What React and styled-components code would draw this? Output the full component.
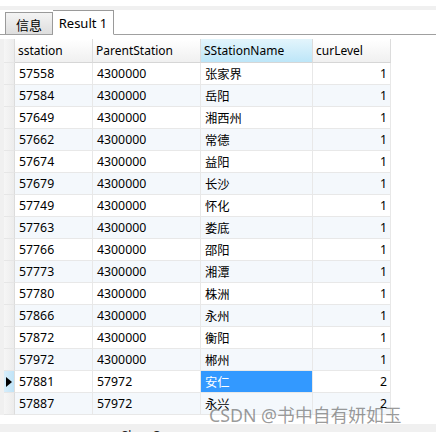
import React from "react";
import styled, { createGlobalStyle } from "styled-components";

const GlobalStyle = createGlobalStyle`
  html, body {
    margin: 0;
    padding: 0;
    background: #fff;
  }
  body {
    font-family: "Noto Sans", "Noto Sans CJK SC", sans-serif;
    font-size: 12px;
    color: #000;
  }
`;

const Window = styled.div`
  width: 436px;
  height: 432px;
  overflow: hidden;
  position: relative;
  background: #fff;
  display: flex;
  flex-direction: column;
`;

const TopBand = styled.div`
  height: 4px;
  margin-top: 6px;
  background: #f0f0f0;
`;

const TabStrip = styled.div`
  display: flex;
  align-items: flex-end;
  height: 24px;
  padding-left: 5px;
  border-bottom: 1px solid #a0a0a0;
`;

const Tab = styled.div`
  box-sizing: border-box;
  display: flex;
  align-items: center;
  justify-content: center;
  width: ${({ $w }) => $w}px;
  height: ${({ $active }) => ($active ? 25 : 22)}px;
  margin-bottom: ${({ $active }) => ($active ? -1 : 0)}px;
  border: 1px solid #9a9a9a;
  border-bottom: ${({ $active }) => ($active ? "1px solid #fff" : "none")};
  border-left: ${({ $active }) => ($active ? "none" : "1px solid #9a9a9a")};
  background: ${({ $active }) =>
    $active ? "#fff" : "linear-gradient(#f4f4f4, #dedede)"};
  font-size: 13px;
  padding-top: ${({ $active }) => ($active ? 0 : 2)}px;
`;

const GridArea = styled.div`
  display: flex;
  padding-top: 4px;
`;

const LeftStrip = styled.div`
  width: 4px;
  background: #f0f0f0;
`;

const Grid = styled.div`
  display: flex;
  flex-direction: column;
`;

const Row = styled.div`
  display: grid;
  grid-template-columns: 11px 78px 108px 112px 78px;
  height: ${({ $head }) => ($head ? 24 : 22)}px;
  background: ${({ $alt }) => ($alt ? "#f4f8fc" : "#fff")};
`;

const RowHead = styled.div`
  box-sizing: border-box;
  position: relative;
  border-right: 1px solid #dcdcdc;
  border-bottom: 1px solid #e6e6e6;
  background: ${({ $sel }) =>
    $sel ? "linear-gradient(90deg, #d8eefb, #bfe3f7)" : "linear-gradient(90deg, #f6f6f6, #ececec)"};
`;

const Pointer = styled.span`
  position: absolute;
  left: 2px;
  top: 6px;
  width: 0;
  height: 0;
  border-top: 5px solid transparent;
  border-bottom: 5px solid transparent;
  border-left: 6px solid #000;
`;

const HeadCell = styled.div`
  box-sizing: border-box;
  display: flex;
  align-items: center;
  padding-left: 3px;
  border-right: 1px solid #dcdcdc;
  border-bottom: 1px solid #d6d6d6;
  background: ${({ $sorted }) =>
    $sorted ? "linear-gradient(#e3f5fc, #bde6f8)" : "linear-gradient(#fff, #f0f0f0)"};
  font-size: 12px;
`;

const Cell = styled.div`
  box-sizing: border-box;
  display: flex;
  align-items: center;
  justify-content: ${({ $right }) => ($right ? "flex-end" : "flex-start")};
  padding: 0 3px 0 4px;
  border-right: 1px solid #e8e8e8;
  border-bottom: 1px solid #e8e8e8;
  background: ${({ $sel }) => ($sel ? "#3399ff" : "transparent")};
  color: ${({ $sel }) => ($sel ? "#fff" : "#000")};
  font-size: 12.3px;
  white-space: nowrap;
`;

const Spacer = styled.div`
  flex: 1;
`;

const StatusBar = styled.div`
  box-sizing: border-box;
  height: 8px;
  background: #f0f0f0;
  overflow: hidden;
  padding: 6px 0 0 112px;
  font-size: 12px;
  line-height: 12px;
  color: #222;
  white-space: nowrap;
`;

const Watermark = styled.div`
  position: absolute;
  left: 209px;
  top: 401px;
  font-family: "Noto Sans", "Noto Sans CJK SC", sans-serif;
  font-size: 17.8px;
  color: rgba(110, 110, 110, 0.7);
  white-space: nowrap;
`;

const rows = [
  ["57558", "4300000", "张家界", 1],
  ["57584", "4300000", "岳阳", 1],
  ["57649", "4300000", "湘西州", 1],
  ["57662", "4300000", "常德", 1],
  ["57674", "4300000", "益阳", 1],
  ["57679", "4300000", "长沙", 1],
  ["57749", "4300000", "怀化", 1],
  ["57763", "4300000", "娄底", 1],
  ["57766", "4300000", "邵阳", 1],
  ["57773", "4300000", "湘潭", 1],
  ["57780", "4300000", "株洲", 1],
  ["57866", "4300000", "永州", 1],
  ["57872", "4300000", "衡阳", 1],
  ["57972", "4300000", "郴州", 1],
  ["57881", "57972", "安仁", 2],
  ["57887", "57972", "永兴", 2],
];

const SELECTED = 14;

export default function App() {
  return (
    <>
      <GlobalStyle />
      <Window>
        <TopBand />
        <TabStrip>
          <Tab $w={48}>信息</Tab>
          <Tab $w={61} $active>
            Result 1
          </Tab>
        </TabStrip>
        <GridArea>
          <LeftStrip />
          <Grid>
            <Row $head>
              <RowHead />
              <HeadCell>sstation</HeadCell>
              <HeadCell>ParentStation</HeadCell>
              <HeadCell $sorted>SStationName</HeadCell>
              <HeadCell>curLevel</HeadCell>
            </Row>
            {rows.map((r, i) => (
              <Row key={r[0]} $alt={i % 2 === 1}>
                <RowHead $sel={i === SELECTED}>
                  {i === SELECTED && <Pointer />}
                </RowHead>
                <Cell>{r[0]}</Cell>
                <Cell>{r[1]}</Cell>
                <Cell $sel={i === SELECTED}>{r[2]}</Cell>
                <Cell $right>{r[3]}</Cell>
              </Row>
            ))}
          </Grid>
        </GridArea>
        <Spacer />
        <StatusBar>·· ShowCo</StatusBar>
        <Watermark>CSDN @书中自有妍如玉</Watermark>
      </Window>
    </>
  );
}
